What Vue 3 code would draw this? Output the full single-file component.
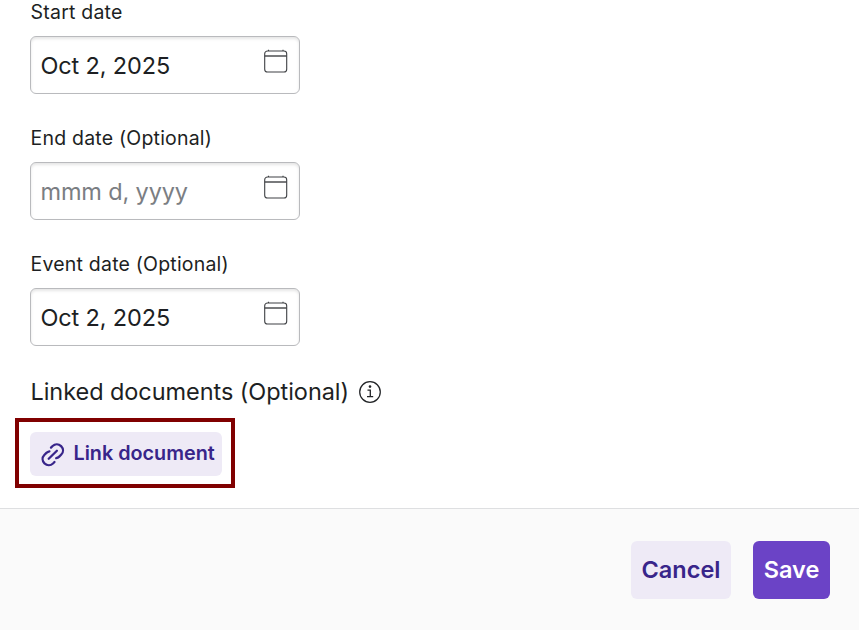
<script setup>
import { ref } from 'vue'

const fields = ref([
  { id: 'start', label: 'Start date', value: 'Oct 2, 2025' },
  { id: 'end', label: 'End date (Optional)', value: '' },
  { id: 'event', label: 'Event date (Optional)', value: 'Oct 2, 2025' },
])
</script>

<template>
  <form class="dialog" @submit.prevent>
    <div class="content">
      <div v-for="field in fields" :key="field.id" class="field">
        <label class="label" :for="field.id">{{ field.label }}</label>
        <div class="control">
          <input :id="field.id" v-model="field.value" class="input" type="text" placeholder="mmm d, yyyy" />
          <svg class="calendar" viewBox="0 0 24 24" fill="none" stroke="#3f4144" stroke-width="1.1">
            <rect x="0.7" y="2" width="22" height="21" rx="2.8" />
            <path d="M0.7 7H22.7" stroke-width="1.4" />
            <path d="M4.5 0.8V2M19 0.8V2" />
          </svg>
        </div>
      </div>
      <div class="linked">
        <span class="heading">Linked documents (Optional)</span>
        <svg class="info" viewBox="0 0 22 22" fill="none" stroke="#222427">
          <circle cx="11" cy="11" r="10.3" stroke-width="1.25" />
          <path d="M8.5 9.2H11.3V15.6M8 15.7H14.2" stroke-width="1.3" />
          <circle cx="11" cy="5.6" r="1.3" fill="#222427" stroke="none" />
        </svg>
      </div>
      <div class="highlight">
        <button class="link-button" type="button">
          <svg class="link-icon" viewBox="0 0 24 24" fill="none" stroke="currentColor" stroke-width="2.3" stroke-linecap="round">
            <path d="M10 4.6 11.6 3C14.1 .7 17.6 .8 20.1 3.1C22.5 5.6 22.6 9.2 20.3 11.5L18.2 13.6C17.3 14.5 16.4 15 15.2 15.2" />
            <path d="M13.5 19 12 20.5C9.5 22.8 6 22.7 3.5 20.4C1.1 17.9 1 14.3 3.3 12L5.4 9.9C6.3 9 7.2 8.5 8.4 8.3" />
            <path d="M7.7 15.8 15.9 7.7" />
          </svg>
          <span>Link document</span>
        </button>
      </div>
    </div>
    <footer class="footer">
      <button class="button cancel" type="button">Cancel</button>
      <button class="button save" type="submit">Save</button>
    </footer>
  </form>
</template>

<style>
body {
  background: #fff;
}
</style>

<style scoped>
.dialog {
  display: flex;
  flex-direction: column;
  height: 630px;
  overflow: hidden;
  font-family: Inter, "Liberation Sans", sans-serif;
  color: #1d1f23;
}
.content {
  flex: none;
  box-sizing: border-box;
  height: 508px;
  padding-left: 30px;
}
.field {
  height: 126px;
}
.label {
  display: block;
  height: 36px;
  padding-left: 0.6px;
  line-height: 24px;
  font-size: 19.5px;
  letter-spacing: 0.2px;
}
.control {
  display: flex;
  box-sizing: border-box;
  width: 270px;
  height: 58px;
  padding: 0 11px 0 9.5px;
  border: 1px solid #b9babd;
  border-radius: 6px;
  background: #fff;
  box-shadow: inset 0 2px 3px rgba(0, 0, 0, 0.1);
}
.input {
  flex: 1;
  min-width: 0;
  padding: 0;
  border: 0;
  outline: 0;
  background: transparent;
  color: inherit;
  font: 400 23.5px Inter, "Liberation Sans", sans-serif;
  letter-spacing: -0.15px;
}
.input::placeholder {
  color: #7b7e83;
  opacity: 1;
}
.calendar {
  flex: none;
  width: 24px;
  height: 24px;
  margin-top: 12px;
}
.linked {
  display: flex;
  align-items: center;
  height: 28px;
  padding-left: 0.5px;
  gap: 9.5px;
}
.heading {
  font-size: 23.5px;
  line-height: 28px;
  letter-spacing: -0.06px;
}
.info {
  flex: none;
  width: 22px;
  height: 22px;
}
.highlight {
  box-sizing: border-box;
  width: 220px;
  height: 70px;
  margin: 12px 0 0 -15px;
  padding: 10px 11px;
  border: 4px solid #800000;
}
button {
  border: 0;
  border-radius: 6px;
  font-family: inherit;
  font-weight: 600;
  color: #38258a;
  background: #eeeaf6;
}
.link-button {
  display: flex;
  align-items: center;
  width: 192px;
  height: 44px;
  padding: 0 0 2px 10.5px;
  gap: 9px;
  font-size: 19.8px;
  white-space: nowrap;
}
.link-icon {
  flex: none;
  width: 24px;
  height: 24px;
  margin-top: 3px;
}
.footer {
  flex: 1;
  display: flex;
  justify-content: flex-end;
  align-items: flex-start;
  gap: 22px;
  padding: 32px 29px 0 0;
  border-top: 1px solid #dedfe1;
  background: #fafafa;
}
.button {
  height: 58px;
  padding: 0 0 2px;
  font-size: 23.5px;
}
.cancel {
  width: 100px;
}
.save {
  width: 77px;
  color: #fff;
  background: #6b43c6;
}
</style>
